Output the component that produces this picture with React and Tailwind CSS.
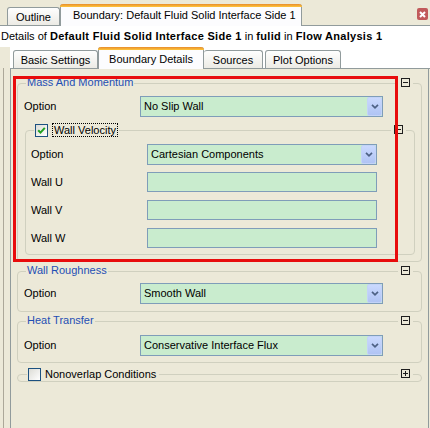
import React from "react";

function Collapse({ plus = false, className = "" }) {
  return (
    <div className={`absolute bg-[#ece9d8] px-[3px] ${className}`}>
      <div className="relative w-[9px] h-[9px] border border-[#1e1e1e] flex items-center justify-center">
        <div className="w-[5px] h-px bg-[#1e1e1e]" />
        {plus && <div className="absolute left-[3px] top-[1px] w-px h-[5px] bg-[#1e1e1e]" />}
      </div>
    </div>
  );
}

function Select({ value, w }) {
  return (
    <div className={`h-[21px] border border-[#7f9db9] bg-[#c9ecce] flex items-center ${w}`}>
      <span className="flex-1 pl-[3px] whitespace-nowrap overflow-hidden">{value}</span>
      <div className="w-[15px] h-full rounded-[2px] bg-gradient-to-b from-[#cad9fe] to-[#b0c4f4] border border-[#c3d3f8] flex items-center justify-center">
        <svg width="8" height="5" viewBox="0 0 8 5">
          <path d="M1 0.8 L4 3.8 L7 0.8" stroke="#4d6185" strokeWidth="1.7" fill="none" />
        </svg>
      </div>
    </div>
  );
}

function Input({ w }) {
  return <div className={`h-[20px] border border-[#7f9db9] bg-[#c9ecce] ${w}`} />;
}

function Check({ checked }) {
  return (
    <div className="w-[13px] h-[13px] border border-[#1c5180] bg-gradient-to-br from-[#dcdcd6] to-[#ffffff] flex items-center justify-center">
      {checked && (
        <svg width="9" height="9" viewBox="0 0 9 9">
          <path d="M1.2 4.2 L3.5 6.6 L7.8 1.8" stroke="#21a121" strokeWidth="2" fill="none" />
        </svg>
      )}
    </div>
  );
}

function Title({ children, className = "" }) {
  return (
    <div className={`absolute bg-[#ece9d8] px-[1px] leading-[13px] text-[#1f4fb4] whitespace-nowrap ${className}`}>
      {children}
    </div>
  );
}

function Row({ label, children, labelW }) {
  return (
    <div className="flex items-center">
      <div className={labelW}>{label}</div>
      {children}
    </div>
  );
}

export default function App() {
  return (
    <div className="relative w-[430px] h-[428px] overflow-hidden bg-[#ece9d8] text-[11px] text-black font-['Liberation_Sans',Arial,sans-serif]">
      {/* top tab strip */}
      <div className="h-[26px] flex items-end border-b border-[#919b9c]">
        <div className="ml-[7px] w-[53px] h-[18px] border border-b-0 border-[#919b9c] rounded-t-[3px] bg-gradient-to-b from-[#fefefe] to-[#ecebe5] flex items-center justify-center leading-none pt-[1px]">
          Outline
        </div>
        <div className="relative w-[242px] h-[22px] mb-[-1px] border-x border-[#919b9c] rounded-t-[3px] bg-[#fcfcfe] flex items-start pl-[12px] pt-[6px] leading-none">
          <div className="absolute left-[-1px] right-[-1px] top-0 h-[3px] rounded-t-[3px] bg-gradient-to-b from-[#e68b2c] to-[#ffc73c]" />
          Boundary: Default Fluid Solid Interface Side 1
        </div>
        <div className="ml-auto mr-[2px] self-start mt-[8px] w-[11px] h-[12px] rounded-[2px] bg-[#c15a5b] flex items-center justify-center">
          <svg width="7" height="7" viewBox="0 0 7 7">
            <path d="M1 1 L6 6 M6 1 L1 6" stroke="#ffffff" strokeWidth="2" />
          </svg>
        </div>
      </div>

      {/* details line */}
      <div className="h-[21px] bg-white flex items-center pl-[1px] whitespace-nowrap leading-none">
        <span>Details of&nbsp;</span>
        <b className="tracking-[0.3px]">Default Fluid Solid Interface Side 1</b>
        <span>&nbsp;in&nbsp;</span>
        <b className="tracking-[0.3px]">fulid</b>
        <span>&nbsp;in&nbsp;</span>
        <b className="tracking-[0.3px]">Flow Analysis 1</b>
      </div>

      {/* second tab strip */}
      <div className="h-[22px] bg-white flex items-end border-b border-[#919b9c] ml-[10px] pl-[3px]">
        <div className="w-[85px] h-[18px] border border-b-0 border-[#919b9c] rounded-t-[3px] bg-gradient-to-b from-[#fefefe] to-[#ecebe5] flex items-center justify-center leading-none pt-[2px]">
          Basic Settings
        </div>
        <div className="relative w-[106px] h-[22px] mb-[-1px] border-x border-[#919b9c] rounded-t-[3px] bg-[#fcfcfe] flex items-start justify-center pt-[7px] leading-none">
          <div className="absolute left-[-1px] right-[-1px] top-0 h-[3px] rounded-t-[3px] bg-gradient-to-b from-[#e68b2c] to-[#ffc73c]" />
          Boundary Details
        </div>
        <div className="w-[59px] h-[18px] border border-b-0 border-l-0 border-[#919b9c] rounded-t-[3px] bg-gradient-to-b from-[#fefefe] to-[#ecebe5] flex items-center justify-center leading-none pt-[2px]">
          Sources
        </div>
        <div className="ml-[2px] w-[76px] h-[18px] border border-b-0 border-[#919b9c] rounded-t-[3px] bg-gradient-to-b from-[#fefefe] to-[#ecebe5] flex items-center justify-center leading-none pt-[2px]">
          Plot Options
        </div>
      </div>

      {/* panel area */}
      <div className="flex h-[362px] mt-[-1px]">
        <div className="ml-[3px] w-px bg-[#aca899]" />
        <div className="ml-[6px] w-[419px] h-full border-x border-t border-[#919b9c] bg-[#ece9d8] px-[6px] pt-[14px]">
          {/* Mass And Momentum */}
          <div className="relative border border-[#d0d0bf] rounded-[4px] pt-[12px] pb-[6px]">
            <Title className="left-[8px] top-[-8px]">Mass And Momentum</Title>
            <Collapse className="right-[8px] top-[-6px]" />
            <div className="pl-[6px]">
              <Row label="Option" labelW="w-[116px]">
                <Select value="No Slip Wall" w="w-[243px]" />
              </Row>
            </div>
            {/* Wall Velocity */}
            <div className="relative mt-[13px] ml-[7px] mr-[6px] border border-[#d0d0bf] rounded-[4px] pt-[13px] pb-[6px] pl-[5px]">
              <div className="absolute left-[8px] top-[-8px] bg-[#ece9d8] px-[1px] flex items-center gap-[4px]">
                <Check checked />
                <div className="border border-dotted border-black px-[1px] leading-[12px]">Wall Velocity</div>
              </div>
              <Collapse className="right-[8px] top-[-6px]" />
              <div className="flex flex-col">
                <Row label="Option" labelW="w-[116px]">
                  <Select value="Cartesian Components" w="w-[230px]" />
                </Row>
                <div className="mt-[7px]">
                  <Row label="Wall U" labelW="w-[116px]">
                    <Input w="w-[230px]" />
                  </Row>
                </div>
                <div className="mt-[8px]">
                  <Row label="Wall V" labelW="w-[116px]">
                    <Input w="w-[230px]" />
                  </Row>
                </div>
                <div className="mt-[8px]">
                  <Row label="Wall W" labelW="w-[116px]">
                    <Input w="w-[230px]" />
                  </Row>
                </div>
              </div>
            </div>
          </div>

          {/* Wall Roughness */}
          <div className="relative mt-[9px] border border-[#d0d0bf] rounded-[4px] pt-[11px] pb-[7px] pl-[6px]">
            <Title className="left-[8px] top-[-8px]">Wall Roughness</Title>
            <Collapse className="right-[8px] top-[-6px]" />
            <Row label="Option" labelW="w-[116px]">
              <Select value="Smooth Wall" w="w-[243px]" />
            </Row>
          </div>

          {/* Heat Transfer */}
          <div className="relative mt-[9px] border border-[#d0d0bf] rounded-[4px] pt-[13px] pb-[6px] pl-[6px]">
            <Title className="left-[8px] top-[-8px]">Heat Transfer</Title>
            <Collapse className="right-[8px] top-[-6px]" />
            <Row label="Option" labelW="w-[116px]">
              <Select value="Conservative Interface Flux" w="w-[243px]" />
            </Row>
          </div>

          {/* Nonoverlap Conditions */}
          <div className="relative mt-[11px] h-[8px] border border-[#d0d0bf] rounded-[4px]">
            <div className="absolute left-[9px] top-[-7px] bg-[#ece9d8] px-[1px] flex items-center gap-[4px]">
              <Check />
              <div className="leading-[13px] pr-[2px]">Nonoverlap Conditions</div>
            </div>
            <Collapse plus className="right-[8px] top-[-6px]" />
          </div>
        </div>
      </div>

      {/* red annotation */}
      <div className="absolute left-[13px] top-[76px] w-[385px] h-[186px] border-[3px] border-[#e80c0c] pointer-events-none" />
    </div>
  );
}
